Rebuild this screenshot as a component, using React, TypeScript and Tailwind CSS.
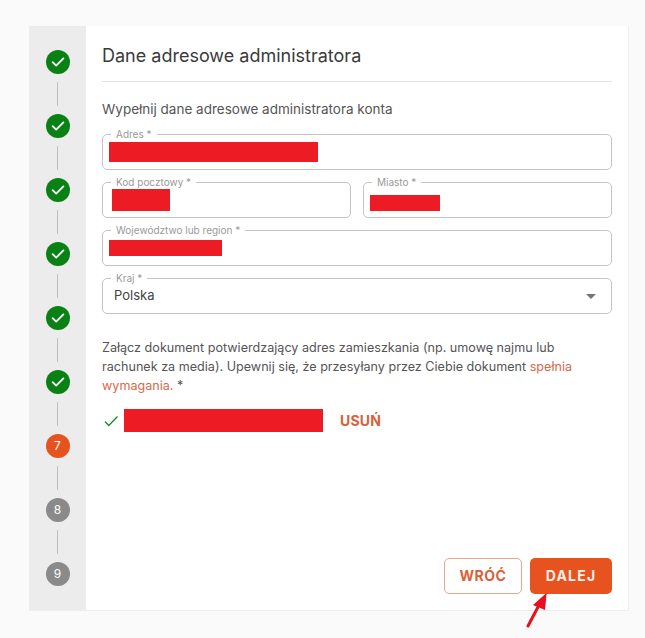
import React, { FC, ReactNode } from "react";

const steps = [1, 2, 3, 4, 5, 6, 7, 8, 9];

const StepDot: FC<{ n: number }> = ({ n }) => {
  if (n < 7) {
    return (
      <div className="w-6 h-6 rounded-full bg-[#0b8114] flex items-center justify-center">
        <svg width="14" height="14" viewBox="0 0 14 14" fill="none">
          <path
            d="M1.6 7.2 L5.2 10.6 L12.4 3.4"
            stroke="#fff"
            strokeWidth="1.8"
            strokeLinecap="round"
            strokeLinejoin="round"
          />
        </svg>
      </div>
    );
  }
  return (
    <div
      className={
        n === 7
          ? "w-6 h-6 rounded-full bg-[#e6531f] text-white text-xs flex items-center justify-center"
          : "w-6 h-6 rounded-full bg-[#8a8a8a] text-white text-xs flex items-center justify-center"
      }
    >
      {n}
    </div>
  );
};

const Field: FC<{ label: string; className?: string; children?: ReactNode }> = ({
  label,
  className,
  children,
}) => (
  <fieldset
    className={`h-[41px] border border-[#c4c4c4] rounded-[5px] px-[6px] min-w-0 ${className ?? ""}`}
  >
    <legend className="ml-[2px] px-[5px] text-[10px] leading-[10px] text-[#9a9a9a]">
      {label}
    </legend>
    {children}
  </fieldset>
);

const Redact: FC<{ className: string }> = ({ className }) => (
  <div className={`bg-[#ed1c24] ${className}`} />
);

export default function App() {
  return (
    <div
      className="w-[645px] h-[638px] bg-[#fafafa] pt-[26px] pl-[29px] overflow-hidden"
      style={{ fontFamily: '"Inter", "Noto Sans", sans-serif' }}
    >
      <div className="relative w-[600px] h-[585px] flex bg-white border border-[#eeeeee] border-l-0 border-t-0">
        <div className="w-[57px] shrink-0 bg-[#ececec] flex flex-col items-center pt-[24px]">
          {steps.map((n) => (
            <div key={n} className="flex flex-col items-center">
              <StepDot n={n} />
              {n < 9 && <div className="w-px h-6 my-2 bg-[#bdbdbd]" />}
            </div>
          ))}
        </div>

        <div className="flex-1 flex flex-col px-4">
          <h1 className="mt-[18px] text-[18px] leading-[24px] text-[#3a3a3a]">
            Dane adresowe administratora
          </h1>
          <div className="mt-[13px] h-px bg-[#e2e2e2]" />
          <p className="mt-[18px] text-[13.5px] leading-[18px] text-[#555]">
            Wypełnij dane adresowe administratora konta
          </p>

          <div className="mt-[11px] flex flex-col gap-[7px]">
            <Field label="Adres *">
              <Redact className="w-[209px] h-5 mt-[3px]" />
            </Field>
            <div className="flex gap-3">
              <Field label="Kod pocztowy *" className="flex-1">
                <Redact className="w-[58px] h-[22px] mt-[2px] ml-[3px]" />
              </Field>
              <Field label="Miasto *" className="flex-1">
                <Redact className="w-[70px] h-4 mt-[8px]" />
              </Field>
            </div>
            <Field label="Województwo lub region *">
              <Redact className="w-[113px] h-4 mt-[5px]" />
            </Field>
            <Field label="Kraj *">
              <div className="flex items-center justify-between h-[26px] pl-[5px] pr-[9px]">
                <span className="text-[13px] text-[#444]">Polska</span>
                <svg width="10" height="5" viewBox="0 0 10 5">
                  <path d="M0 0 H10 L5 5 Z" fill="#757575" />
                </svg>
              </div>
            </Field>
          </div>

          <p className="mt-[24px] text-[12.6px] leading-[19px] text-[#555]">
            Załącz dokument potwierdzający adres zamieszkania (np. umowę najmu lub
            <br />
            rachunek za media). Upewnij się, że przesyłany przez Ciebie dokument{" "}
            <span className="text-[#d9694a]">
              spełnia
              <br />
              wymagania.
            </span>{" "}
            *
          </p>

          <div className="mt-[14px] flex items-center">
            <svg width="16" height="12" viewBox="0 0 16 12" fill="none" className="ml-[1px]">
              <path d="M2 6.5 L5.8 10.5 L14.5 1.5" stroke="#1b8a2a" strokeWidth="1.3" />
            </svg>
            <Redact className="w-[199px] h-[23px] ml-[5px]" />
            <span className="ml-[17px] text-sm font-bold tracking-[0.2px] text-[#d9613a]">USUŃ</span>
          </div>

          <div className="mt-auto mb-[16px] flex justify-end gap-2">
            <button className="w-[78px] h-9 rounded-[5px] border border-[#e9a68f] text-sm font-bold tracking-[0.5px] text-[#d9613a]">
              WRÓĆ
            </button>
            <button className="w-[82px] h-9 rounded-[5px] bg-[#e6531f] text-sm font-bold tracking-[1.2px] text-[#fdeee8]">
              DALEJ
            </button>
          </div>
        </div>

        <svg
          className="absolute left-[497px] top-[566px]"
          width="24"
          height="38"
          viewBox="0 0 24 38"
        >
          <path d="M2 34 L12 15" stroke="#e8101f" strokeWidth="3" strokeLinecap="round" />
          <path d="M20.7 0.7 L19 18 L7 13 Z" fill="#e8101f" />
        </svg>
      </div>
    </div>
  );
}
